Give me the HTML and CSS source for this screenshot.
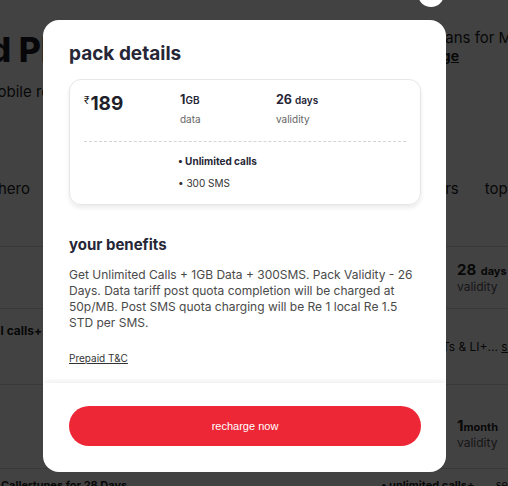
FILE: index.html
```html
<!DOCTYPE html>
<html lang="en">
<head>
<meta charset="utf-8">
<title>pack details</title>
<link rel="stylesheet" href="styles.css">
</head>
<body>
<div class="page">
  <div class="page-head">
    <div class="head-left">
      <h1 class="page-title">Prepaid Plans</h1>
      <p class="page-sub">Mobile recharge plans</p>
    </div>
    <div class="head-right">
      <p class="offer">Plans for MAX</p>
      <a class="offer-link">change</a>
    </div>
  </div>
  <div class="tabs">
    <span class="tab-left">hero</span>
    <span class="tab-right">others<span class="tab-gap"></span>top up</span>
  </div>
  <div class="plan-row">
    <div class="plan-stat"><b>28</b> <small>days</small><span>validity</span></div>
  </div>
  <div class="plan-foot">
    <span class="pf-left">Unlimited local calls+...</span>
    <span class="pf-right">OTTs &amp; LI+... <u>see more</u></span>
  </div>
  <div class="plan-row second">
    <div class="plan-stat"><b>1</b><small>month</small><span>validity</span></div>
  </div>
  <div class="plan-foot last">
    <span class="pf-left">Unlimited Callertunes for 28 Days</span>
    <span class="pf-right">• unlimited calls+... <span class="more">see more</span></span>
  </div>
</div>

<div class="overlay"></div>

<div class="modal" role="dialog">
  <div class="close" aria-label="close"></div>
  <div class="modal-body">
    <h2 class="modal-title">pack details</h2>
    <div class="pack-card">
      <div class="pack-stats">
        <div class="price"><span class="rupee">₹</span>189</div>
        <div class="stat">
          <div class="stat-val">1<small>GB</small></div>
          <div class="stat-label">data</div>
        </div>
        <div class="stat">
          <div class="stat-val">26 <small>days</small></div>
          <div class="stat-label">validity</div>
        </div>
      </div>
      <div class="pack-divider"></div>
      <ul class="pack-list">
        <li class="strong">• Unlimited calls</li>
        <li>• 300 SMS</li>
      </ul>
    </div>
    <h3 class="benefits-title">your benefits</h3>
    <p class="benefits-text">Get Unlimited Calls + 1GB Data + 300SMS. Pack Validity - 26 Days. Data tariff post quota completion will be charged at 50p/MB. Post SMS quota charging will be Re 1 local Re 1.5 STD per SMS.</p>
    <a class="tnc">Prepaid T&amp;C</a>
  </div>
  <div class="modal-foot">
    <button class="recharge">recharge now</button>
  </div>
</div>
</body>
</html>
```

FILE: styles.css
```css
* { box-sizing: border-box; }
html, body { margin: 0; padding: 0; }
body {
  width: 508px;
  height: 486px;
  overflow: hidden;
  background: #ffffff;
  font-family: Inter, "Noto Sans", sans-serif;
  color: #222;
}

/* ---------- background page ---------- */
.page {
  width: 640px;
  margin-left: -88px;
  padding-top: 30px;
}
.page-head {
  display: flex;
  justify-content: space-between;
}
.page-title {
  margin: 0 0 0 -30px;
  font-size: 34px;
  font-weight: 800;
  line-height: 40px;
  white-space: nowrap;
  color: #1d1d2a;
}
.page-sub {
  margin: 12px 0 0 72px;
  font-size: 15px;
  white-space: nowrap;
}
.head-left { width: 300px; overflow: hidden; }
.head-right {
  width: 200px;
  margin-right: -58px;
  font-size: 15px;
}
.offer { margin: 0 0 0 22px; line-height: 16px; white-space: nowrap; }
.offer-link { text-decoration: underline; font-weight: 700; font-size: 14px; margin-left: -2px; }

.tabs {
  display: flex;
  justify-content: space-between;
  margin-top: 78px;
  font-size: 15px;
}
.tab-left { margin-left: 86px; }
.tab-right { margin-right: 22px; white-space: nowrap; }
.tab-gap { display: inline-block; width: 26px; }

.plan-row {
  margin-top: 48px;
  border-top: 1px solid #ddd;
  padding: 12px 0 12px 545px;
  height: 62px;
}
.plan-row.second { margin-top: 16px; padding-top: 30px; height: 84px; }
.plan-stat b { font-size: 15px; }
.plan-stat small { font-size: 11px; font-weight: 700; }
.plan-stat span { display: block; font-size: 12px; color: #555; margin-top: 0; }

.plan-foot {
  display: flex;
  justify-content: space-between;
  border-top: 1px solid #ddd;
  padding-top: 14px;
  font-size: 12px;
  height: 60px;
}
.plan-foot.last { height: 40px; padding-top: 9px; font-size: 11px; }
.pf-left { margin-left: 5px; font-weight: 700; white-space: nowrap; }
.pf-right { white-space: nowrap; margin-right: -2px; padding-top: 16px; }
.plan-foot.last .pf-left { margin-left: 35px; }
.plan-foot.last .pf-right { padding-top: 0; margin-right: 8px; font-weight: 700; }
.plan-foot.last .more { font-weight: 400; margin-left: 8px; }

/* ---------- overlay ---------- */
.overlay {
  position: fixed;
  inset: 0;
  background: rgba(0, 0, 0, 0.74);
}

/* ---------- modal ---------- */
.modal {
  position: fixed;
  left: 43px;
  top: 20px;
  width: 403px;
  height: 452px;
  background: #fff;
  border-radius: 16px;
  display: flex;
  flex-direction: column;
}
.close {
  position: absolute;
  top: -39px;
  left: 375px;
  width: 26px;
  height: 26px;
  border-radius: 50%;
  background: #fff;
}
.modal-body {
  flex: 1;
  overflow: hidden;
  padding: 22px 25px 0 26px;
}
.modal-title {
  margin: 0;
  font-size: 19px;
  line-height: 24px;
  font-weight: 700;
  color: #262636;
}
.pack-card {
  margin-top: 13px;
  border: 1px solid #e6e6e8;
  border-radius: 12px;
  box-shadow: 0 3px 4px rgba(0, 0, 0, 0.08);
  padding: 8px 14px 5px 14px;
}
.pack-stats {
  display: grid;
  grid-template-columns: 96px 96px 1fr;
  height: 42px;
}
.price {
  font-size: 19px;
  font-weight: 700;
  color: #1f1f2b;
  line-height: 24px;
}
.rupee { font-size: 10px; font-weight: 400; vertical-align: 6px; margin-right: 1px; }
.stat-val {
  font-size: 12.5px;
  font-weight: 700;
  color: #262636;
  line-height: 16px;
  margin-top: 4px;
}
.stat-val small { font-size: 10px; font-weight: 600; }
.stat-label {
  font-size: 10px;
  color: #666;
  margin-top: 5px;
  line-height: 12px;
}
.pack-divider {
  border-top: 1px dashed #d4d4d4;
  margin: 11px 0 0;
}
.pack-list {
  list-style: none;
  margin: 0;
  padding: 13px 0 0 94px;
  font-size: 10px;
  color: #333;
}
.pack-list li { line-height: 12px; margin-bottom: 10px; }
.pack-list li.strong { font-weight: 700; color: #262636; }

.benefits-title {
  margin: 30px 0 0;
  font-size: 15px;
  line-height: 20px;
  font-weight: 700;
  color: #262636;
}
.benefits-text {
  margin: 12px 0 0;
  font-size: 12px;
  line-height: 16px;
  color: #4a4a4a;
}
.tnc {
  display: inline-block;
  margin-top: 21px;
  font-size: 10px;
  color: #333;
  text-decoration: underline;
}

.modal-foot {
  flex: none;
  height: 89px;
  padding: 23px 25px 0 26px;
  box-shadow: 0 -4px 5px -2px rgba(0, 0, 0, 0.07);
  border-radius: 0 0 16px 16px;
  position: relative;
}
.recharge {
  display: block;
  width: 352px;
  height: 40px;
  border: 0;
  border-radius: 20px;
  background: #ee2737;
  color: #fff;
  font-family: "Liberation Sans", Arial, sans-serif;
  font-size: 11px;
}
```
